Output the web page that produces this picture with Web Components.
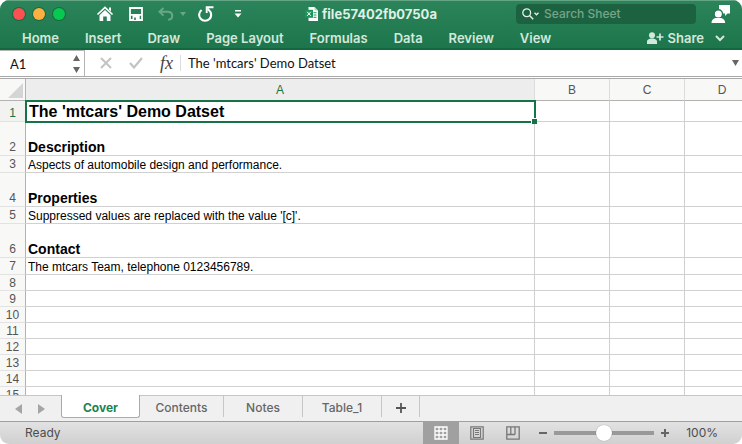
<!DOCTYPE html>
<html lang="en">
<head>
<meta charset="utf-8">
<title>file57402fb0750a</title>
<style>
  html, body { margin: 0; height: 100%; background: #fff; }
</style>
</head>
<body>
<spreadsheet-window></spreadsheet-window>
<script>
const define = (name, html, setup) => {
  const template = document.createElement('template');
  template.innerHTML = html;
  customElements.define(name, class extends HTMLElement {
    constructor() {
      super();
      this.attachShadow({ mode: 'open' }).append(template.content.cloneNode(true));
    }
    connectedCallback() { if (setup) setup(this, this.shadowRoot); }
  });
};

const buttonReset = `button { font: inherit; color: inherit; background: none; border: 0; padding: 0; margin: 0; display: block; }
  svg { display: block; }`;

/* Square icon button; the glyph is slotted in. */
define('icon-button', `
<style>
  :host { display: block; flex: none; }
  ${buttonReset}
</style>
<button type="button"><slot></slot></button>`, (el, root) => {
  root.querySelector('button').setAttribute('aria-label', el.getAttribute('label') || '');
});

define('title-bar', `
<style>
  :host { display: flex; align-items: center; height: 28px; padding: 0 12px 0 13px; box-sizing: border-box; color: #fff; }
  ${buttonReset}
  .lights { display: flex; gap: 8px; padding-bottom: 1px; }
  .light { width: 12px; height: 12px; border-radius: 50%; box-shadow: 0 0 0 1px rgba(0,60,25,.35); }
  .tools { display: flex; align-items: center; margin-left: 31px; }
  .tools > * + * { margin-left: 15px; }
  .tools .near { margin-left: 6px; }
  .tools .mid { margin-left: 12px; }
  .tools .far { margin-left: 19px; }
  .name { flex: 1; display: flex; align-items: center; justify-content: center; gap: 4px; margin: 0 16px 0 0; font: 700 13px/20px Inter, "Liberation Sans", sans-serif; color: #dff0e6; white-space: nowrap; }
  .search { display: flex; align-items: center; width: 180px; height: 20px; box-sizing: border-box; padding: 0 6px; gap: 4px; background: #1d6240; border-radius: 4px; margin-right: 15px; }
  input { flex: 1; min-width: 0; background: none; border: 0; padding: 0; outline: 0; font: 500 12px/20px Inter, "Liberation Sans", sans-serif; color: #fff; }
  input::placeholder { color: #75a58b; opacity: 1; }
</style>
<div class="lights">
  <button class="light" style="background:#fc5152" aria-label="Close"></button>
  <button class="light" style="background:#fdb041" aria-label="Minimise"></button>
  <button class="light" style="background:#07c950" aria-label="Zoom"></button>
</div>
<div class="tools">
  <icon-button label="Home"><svg width="18" height="16" viewBox="0 0 18 16"><path d="M1.5 8.500 9 1.500l7.500 7" fill="none" stroke="#fff" stroke-width="1.700"/><path d="M13 1.500h2v4l-2-2z" fill="#fff"/><path d="M3.500 9.200 9 4l5.500 5.200V15h-3.700v-4.500H7.200V15H3.500z" fill="#fff"/></svg></icon-button>
  <icon-button label="Save"><svg width="14" height="14" viewBox="0 0 14 14"><path d="M1 1h12v12H1z" fill="none" stroke="#fff" stroke-width="1.800"/><path d="M1 7h12v1.800H1zM3.500 8.500h7.200v5H3.500z" fill="#fff"/><path d="M5.200 10.500h1.600V13H5.200z" fill="#237b50"/></svg></icon-button>
  <icon-button label="Undo"><svg width="16" height="14" viewBox="0 0 16 14"><path d="M5.500 1 1.500 4.800l4 3.800M2 4.800h7.500c3 0 4.700 1.700 4.700 4 0 2.400-1.700 3.900-4 3.900" fill="none" stroke="#69a786" stroke-width="2"/></svg></icon-button>
  <icon-button class="near" label="Undo history"><svg width="6" height="4" viewBox="0 0 6 4"><path d="M0 0h6L3 4z" fill="#69a786"/></svg></icon-button>
  <icon-button class="mid" label="Redo"><svg width="17" height="16" viewBox="0 0 17 16"><path d="M3.600 4A6 6 0 1 0 11 4.200L9.500 2.500" fill="none" stroke="#fff" stroke-width="2.100"/><path d="M8.700 7V1.200H15.500" fill="none" stroke="#fff" stroke-width="1.900"/></svg></icon-button>
  <icon-button class="far" label="Customise toolbar"><svg width="8" height="8" viewBox="0 0 8 8"><path d="M1 0h6v1.500H1zM.5 3.500h7L4 7.500z" fill="#fff"/></svg></icon-button>
</div>
<div class="name">
  <svg width="13" height="14" viewBox="0 0 13 14"><path d="M3.500 0h6L13 3.500V14H3.500z" fill="#fff"/><path d="M9.500 0v3.500H13z" fill="#b6d2c2"/><path d="M8.500 5.700h3M8.500 8h3M8.500 10.300h3" stroke="#23905a"/><path d="M0 2.800h8v8H0z" fill="#19955a"/><path d="m2.200 4.800 3.600 4m0-4-3.600 4" stroke="#fff"/></svg>
  <span>file57402fb0750a</span>
</div>
<label class="search">
  <svg width="18" height="12" viewBox="0 0 18 12"><circle cx="4.700" cy="4.700" r="3.900" fill="none" stroke="#e4f1ea" stroke-width="1.300"/><path d="m7.500 7.500 3.700 3.700" stroke="#e4f1ea" stroke-width="1.500"/><path d="m12.500 4.800 2 2 2-2" fill="none" stroke="#e4f1ea" stroke-width="1.300"/></svg>
  <input type="text" placeholder="Search Sheet" aria-label="Search Sheet">
</label>
<icon-button label="Account"><svg width="19" height="18" viewBox="0 0 19 18"><path d="M8 0h11v8.500h-2.500L14 11V8.500H8z" fill="#fff"/><circle cx="7.300" cy="9" r="4.200" fill="#fff" stroke="#26794f" stroke-width="1.400"/><path d="M.5 18c0-3.500 2.500-5 5-5h3.600c2.500 0 5 1.500 5 5z" fill="#fff"/></svg></icon-button>`);

define('ribbon-tabs', `
<style>
  :host { display: flex; align-items: center; height: 20px; padding: 0 17px 0 22px; font: 600 13px/18px Inter, "Liberation Sans", sans-serif; color: #d3e8dc; white-space: nowrap; }
  ${buttonReset}
  nav { display: flex; gap: 26px; flex: 1; }
  button.share { display: flex; align-items: center; gap: 4px; margin-right: 11px; }
</style>
<nav>
  <button>Home</button><button>Insert</button><button>Draw</button><button>Page Layout</button>
  <button>Formulas</button><button>Data</button><button>Review</button><button>View</button>
</nav>
<button class="share">
  <svg width="17" height="12" viewBox="0 0 17 12"><circle cx="5" cy="3.200" r="3" fill="#d3e8dc"/><path d="M0 12V9.500C0 7.500 2 7 3.500 6.500h3C8 7 10 7.500 10 9.500V12z" fill="#d3e8dc"/><path d="M13 1.500v7M9.500 5h7" stroke="#d3e8dc" stroke-width="1.700"/></svg>
  <span>Share</span>
</button>
<icon-button label="Collapse ribbon"><svg width="10" height="7" viewBox="0 0 10 7"><path d="m1 1 4 4 4-4" fill="none" stroke="#d3e8dc" stroke-width="2"/></svg></icon-button>`);

define('formula-bar', `
<style>
  :host { display: flex; align-items: center; height: 26px; background: #fff; border-bottom: 1px solid #a9a9a9; color: #222; }
  ${buttonReset}
  .ref { display: flex; align-items: center; box-sizing: border-box; width: 85px; height: 26px; padding: 0 4px 0 10px; border-top: 1px solid #b4b4b4; border-right: 1px solid #b4b4b4; }
  input { border: 0; outline: 0; padding: 0; background: none; min-width: 0; color: #111; font: 13px/16px Lato, "Liberation Sans", sans-serif; }
  .ref input { flex: 1; width: 0; }
  .actions { display: flex; align-items: center; gap: 17px; padding: 0 7px 0 15px; }
  .fx { font: italic 18px/20px "Liberation Serif", serif; color: #444; }
  .text { flex: 1; height: 16px; border-left: 1px solid #ddd; padding-left: 7px; }
  .more { padding: 0 3px; }
</style>
<div class="ref">
  <input type="text" value="A1" aria-label="Name box">
  <icon-button label="Name list"><svg width="7" height="20" viewBox="0 0 7 20"><path d="M0 7h7L3.500 1zM0 13h7l-3.500 6z" fill="#666"/></svg></icon-button>
</div>
<div class="actions">
  <icon-button label="Cancel"><svg width="12" height="12" viewBox="0 0 12 12"><path d="m1 1 10 10M11 1 1 11" stroke="#c3c3c3" stroke-width="2"/></svg></icon-button>
  <icon-button label="Enter"><svg width="14" height="12" viewBox="0 0 14 12"><path d="m1 6 4 4.500L13 1" fill="none" stroke="#c3c3c3" stroke-width="2.200"/></svg></icon-button>
  <button class="fx" aria-label="Insert function">fx</button>
</div>
<input class="text" type="text" value="The 'mtcars' Demo Datset" aria-label="Formula">
<icon-button class="more" label="Expand formula bar"><svg width="7" height="6" viewBox="0 0 7 6"><path d="M0 0h7L3.500 6z" fill="#666"/></svg></icon-button>`);

define('sheet-grid', `
<style>
  :host { display: block; flex: 1; min-height: 0; overflow: hidden; background: #fff; margin-top: 1px; border-top: 1px solid #a9a9a9; }
  table { border-collapse: separate; border-spacing: 0; table-layout: fixed; width: 760px; min-width: 100%; font: 12px/14px "Liberation Sans", Arial, sans-serif; color: #000; }
  .head { width: 26px; } .wide { width: 509px; } .col { width: 75px; }
  th, td { box-sizing: border-box; padding: 0; border: 0 solid #d0d0d0; border-width: 0 1px 1px 0; white-space: nowrap; }
  th { font-weight: 400; color: #555; background: #f8f8f7; text-align: center; }
  thead th { height: 22px; border-bottom-color: #b2b2b2; border-right-color: #dcdcdc; }
  tbody th { border-right-color: #b2b2b2; border-bottom-color: #e2e2e2; vertical-align: bottom; }
  thead th:first-child { border-right-color: #b2b2b2; vertical-align: bottom; }
  th.on { color: #157347; background: #ededed; }
  tbody th.on { background: #f2f2f1; }
  td { text-align: left; vertical-align: bottom; padding-left: 2px; }
  tr { height: 16px; }
  tr.text { height: 17px; }
  tr.text th, tr.heading th, tr.title th { padding-bottom: 1px; }
  tr.heading { height: 34px; }
  tr.heading td { font-weight: 700; font-size: 14px; line-height: 16px; }
  tr.title { height: 21px; }
  tr.title td { font-weight: 700; font-size: 16px; line-height: 18px; }
  tr.title td:nth-child(2) { position: relative; padding-left: 3px; }
  .selection { position: absolute; inset: -1px -2px -2px -1px; border: 2px solid #157347; pointer-events: none; }
  .selection::after { content: ""; position: absolute; right: -3px; bottom: -3px; width: 5px; height: 5px; background: #157347; border: 1px solid #fff; border-right: 0; border-bottom: 0; }
  svg { display: block; margin: 0 2px 2px auto; }
</style>
<table>
  <colgroup><col class="head"><col class="wide"><col class="col"><col class="col"><col class="col"></colgroup>
  <thead><tr>
    <th><svg width="15" height="15" viewBox="0 0 15 15"><path d="M15 0v15H0z" fill="#d5d5d5"/></svg></th>
    <th class="on" scope="col">A</th><th scope="col">B</th><th scope="col">C</th><th scope="col">D</th>
  </tr></thead>
  <tbody></tbody>
</table>`, (el, root) => {
  const rows = [
    ['title', "The 'mtcars' Demo Datset"],
    ['heading', 'Description'],
    ['text', 'Aspects of automobile design and performance.'],
    ['heading', 'Properties'],
    ['text', "Suppressed values are replaced with the value '[c]'."],
    ['heading', 'Contact'],
    ['text', 'The mtcars Team, telephone 0123456789.'],
  ];
  const body = root.querySelector('tbody');
  for (let i = 0; i < 15; i++) {
    const [kind, text] = rows[i] || ['', ''];
    const tr = body.insertRow();
    tr.className = kind;
    const th = document.createElement('th');
    th.scope = 'row';
    th.textContent = i + 1;
    if (i === 0) th.className = 'on';
    tr.append(th);
    for (let c = 0; c < 4; c++) {
      const td = tr.insertCell();
      if (c === 0) td.textContent = text;
      if (c === 0 && i === 0) {
        const s = document.createElement('span');
        s.className = 'selection';
        td.append(s);
      }
    }
  }
});

define('sheet-tab', `
<style>
  :host { display: block; box-sizing: border-box; height: 21px; border-right: 1px solid #c6c6c6; font: 500 12px/24px Inter, "Liberation Sans", sans-serif; color: #666; }
  :host([active]) { height: 23px; background: #fff; color: #1a8450; font-weight: 700; border: 1px solid #aaa; border-top: 0; border-radius: 0 0 3px 3px; margin-top: -1px; line-height: 26px; }
  ${buttonReset}
  button { width: 100%; text-align: center; }
</style>
<button type="button" role="tab"><slot></slot></button>`, (el, root) => {
  root.querySelector('button').setAttribute('aria-selected', el.hasAttribute('active'));
});

define('sheet-tabs', `
<style>
  :host { display: flex; align-items: flex-start; height: 25px; background: #f0f0f0; border-top: 1px solid #c6c6c6; }
  .arrows { display: flex; gap: 16px; padding: 8px 16px 0 15px; }
  svg { display: block; }
  sheet-tab { flex: none; width: 79px; }
  .contents { width: 84px; }
  .add { width: 38px; }
  .add svg { margin: 7px auto 0; }
</style>
<div class="arrows">
  <icon-button label="Previous sheet"><svg width="7" height="10" viewBox="0 0 7 10"><path d="M7 0v10L0 5z" fill="#a5a5a5"/></svg></icon-button>
  <icon-button label="Next sheet"><svg width="7" height="10" viewBox="0 0 7 10"><path d="M0 0v10l7-5z" fill="#a5a5a5"/></svg></icon-button>
</div>
<sheet-tab active>Cover</sheet-tab>
<sheet-tab class="contents">Contents</sheet-tab>
<sheet-tab>Notes</sheet-tab>
<sheet-tab>Table_1</sheet-tab>
<sheet-tab class="add"><svg role="img" aria-label="Add sheet" width="10" height="10" viewBox="0 0 10 10"><path d="M5 0v10M0 5h10" stroke="#555" stroke-width="1.800"/></svg></sheet-tab>`);

define('status-bar', `
<style>
  :host { display: flex; align-items: center; height: 22px; padding: 0 24px 0 25px; border-top: 1px solid #a0a0a0; background: linear-gradient(#e2e2e2, #d0d0d0); font: 12px/22px Inter, "Liberation Sans", sans-serif; color: #4c4c4c; }
  .state { flex: 1; }
  .view { padding: 4px 11px; }
  .view.on { background: #a0a0a0; }
  svg { display: block; }
  .zoom { display: flex; align-items: center; gap: 7px; margin-left: 8px; }
  input { appearance: none; width: 100px; height: 16px; margin: 0; background: linear-gradient(#999, #999) center / 100% 4px no-repeat; border-radius: 2px; }
  input::-webkit-slider-thumb { appearance: none; width: 16px; height: 16px; border-radius: 50%; background: #fff; box-shadow: 0 0 1px rgba(0,0,0,.4); }
  output { margin-left: 17px; }
</style>
<span class="state">Ready</span>
<icon-button class="view on" label="Normal view"><svg width="14" height="14" viewBox="0 0 14 14"><path d="M1 1h12v12H1zM5 1v12M9 1v12M1 5h12M1 9h12" fill="none" stroke="#fff" stroke-width="1.300"/></svg></icon-button>
<icon-button class="view" label="Page layout view"><svg width="14" height="14" viewBox="0 0 14 14"><path d="M.8.8h12.400v12.400H.8zM3.500 2.500h7v9h-7z" fill="none" stroke="#777" stroke-width="1.200"/><path d="M5 4.500h4M5 6.500h4M5 8.500h4" stroke="#777"/></svg></icon-button>
<icon-button class="view" label="Page break view"><svg width="14" height="14" viewBox="0 0 14 14"><path d="M.8.8h12.400v12.400H.8zM4.800 1v7.500M9 1v7.500M1 8.500h8" fill="none" stroke="#777" stroke-width="1.300"/></svg></icon-button>
<div class="zoom">
  <icon-button label="Zoom out"><svg width="8" height="8" viewBox="0 0 8 8"><path d="M0 4h8" stroke="#666" stroke-width="2"/></svg></icon-button>
  <input type="range" min="0" max="100" value="50" aria-label="Zoom">
  <icon-button label="Zoom in"><svg width="8" height="8" viewBox="0 0 8 8"><path d="M0 4h8M4 0v8" stroke="#666" stroke-width="2"/></svg></icon-button>
</div>
<output>100%</output>`);

define('spreadsheet-window', `
<style>
  :host { display: flex; flex-direction: column; height: 100vh; overflow: hidden; border-radius: 9px; background: #fff; }
  header { background: linear-gradient(#2c845a, #1d764b); box-shadow: inset 0 1px #63a584; border-bottom: 2px solid #13683f; }
</style>
<header><title-bar></title-bar><ribbon-tabs></ribbon-tabs></header>
<formula-bar></formula-bar>
<sheet-grid></sheet-grid>
<sheet-tabs></sheet-tabs>
<status-bar></status-bar>`);
</script>
</body>
</html>
